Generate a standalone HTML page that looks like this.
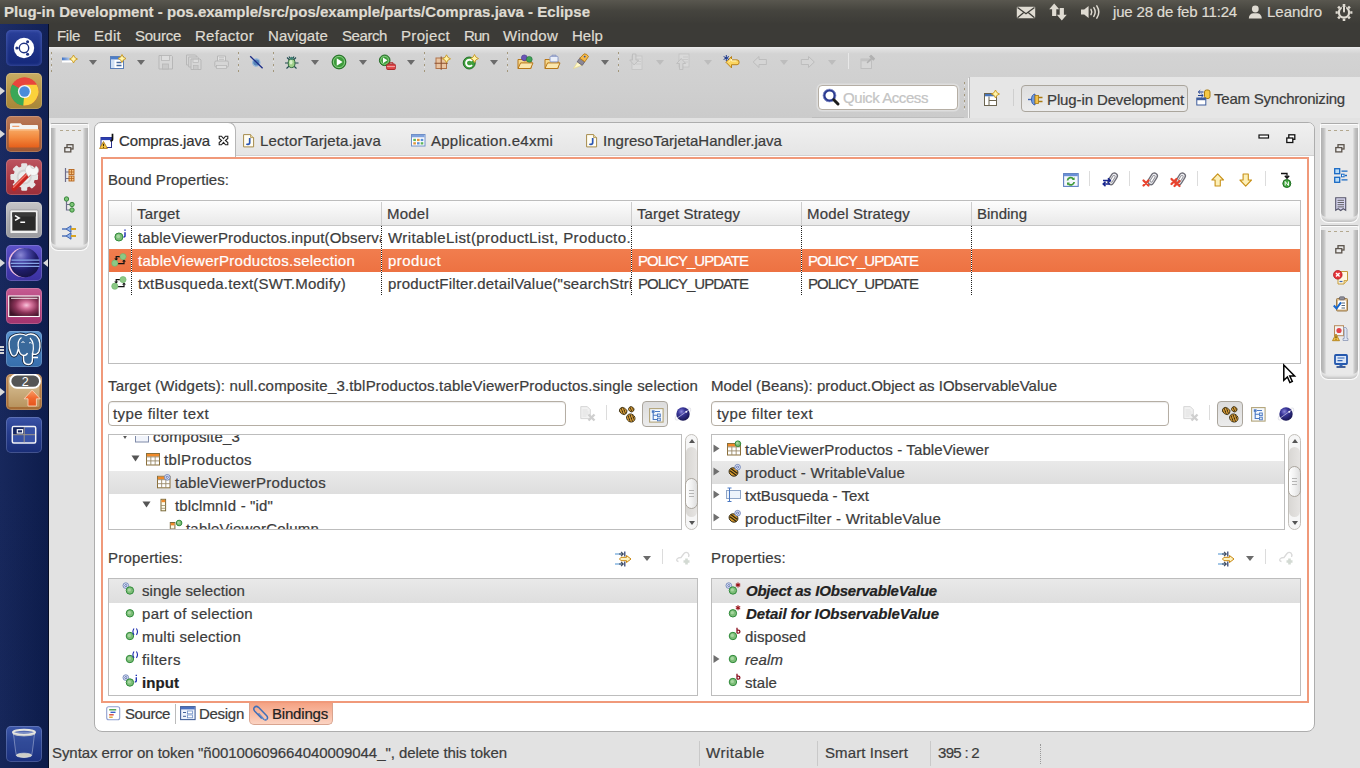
<!DOCTYPE html>
<html><head><meta charset="utf-8"><title>Eclipse</title>
<style>
*{box-sizing:border-box;margin:0;padding:0}
html,body{width:1360px;height:768px;overflow:hidden;background:#e2e2e2}
body{font-family:"Liberation Sans","DejaVu Sans",sans-serif;font-size:15px;color:#3c3c3c;position:relative}
.a{position:absolute}
.t{position:absolute;white-space:nowrap;line-height:20px;height:20px;-webkit-text-stroke:.22px currentColor}
svg{position:absolute;overflow:visible}
#top{left:0;top:0;width:1360px;height:24px;background:linear-gradient(#59574f,#45443e 45%,#3c3b37)}
#menubar{left:48px;top:24px;width:1312px;height:23px;background:#3c3b37}
#top .t,#menubar .t{color:#dfdbd2}
#launcher{left:0;top:24px;width:49px;height:744px;background:linear-gradient(90deg,rgba(255,255,255,.035),rgba(0,0,0,.12)),linear-gradient(#142562,#102158 30%,#0f2056 60%,#0e1f54);border-right:1px solid #070d24}
.tile{position:absolute;left:6px;width:36px;height:36px;border-radius:5px;overflow:hidden;box-shadow:inset 0 0 0 1px rgba(255,255,255,.18)}
#tb{left:49px;top:47px;width:1311px;height:71px;background:linear-gradient(#ececec,#dedede 3px,#d3d3d3 7px,#cfcfcf 60%,#cbcbcb)}
#persp{left:969px;top:77px;width:391px;height:41px;background:#e6e6e6;border-left:1px solid #bdbdbd}
#qa-zone{left:812px;top:117px;width:152px;height:1px;background:#bdbdbd}
#qa{left:818px;top:85px;width:140px;height:25px;background:#fff;border:1px solid #b5aea4;border-radius:4px;box-shadow:0 0 0 1.500px #dedede}
.vsep{position:absolute;width:1px;background:#b9b9b9}
.dots{position:absolute;width:1px;background:repeating-linear-gradient(#a3977b 0 2px,transparent 2px 3px,#e6e6e6 3px 4px,transparent 4px 6px)}
.tri{position:absolute;width:0;height:0;border-left:4px solid transparent;border-right:4px solid transparent;border-top:5px solid #6b6b6b}
.tri.l{border-top-color:#bdbdbd}
#folder{left:94px;top:122px;width:1221px;height:610px;background:#fff;border:1px solid #adadad;border-radius:7px 7px 8px 8px;overflow:hidden}
#tabhdr{left:0;top:0;width:1219px;height:33px;background:linear-gradient(#f0f0f0,#e5e5e5);border-bottom:1px solid #d2d2d2}
#acttab{left:-1px;top:-1px;width:142px;height:36px;background:#fff;border:1px solid #b6b6b6;border-bottom:none;border-radius:7px 8px 0 0}
#obox{left:101px;top:157px;width:1208px;height:546px;border:2px solid #f0997a;background:#fff}
.tbl{position:absolute;border:1px solid #bdbdbd;background:#fff}
.hdr{position:absolute;background:linear-gradient(#fdfdfd,#f3f3f3 50%,#e9e9e9);border-bottom:1px solid #c6c6c6}
.hsep{position:absolute;width:1px;background:#cdcdcd}
.dv{position:absolute;width:1px;background:repeating-linear-gradient(#222 0 1px,#fff 1px 2px)}
.selrow{position:absolute;background:linear-gradient(#f17d4e,#ed7242)}
.grow{position:absolute;background:linear-gradient(#e9e9e9,#dedede)}
.inp{position:absolute;background:#fff;border:1px solid #b5aea4;border-radius:4px;box-shadow:inset 0 1px 1px rgba(0,0,0,.08)}
.btn{position:absolute;border:1px solid #aaa59c;border-radius:4px;background:linear-gradient(#dcdcdc,#ececec)}
.sb{position:absolute;width:13px;background:#f6f6f6;border:1px solid #c3c0bb;border-radius:7px}
.sbtr{position:absolute;left:0;right:0;top:12px;bottom:12px;background:linear-gradient(90deg,#d9d7d4,#e6e4e2);border-radius:6px}
.sbt{position:absolute;left:-1px;width:13px;border:1px solid #aba69e;border-radius:6.5px;background:linear-gradient(90deg,#fff,#f1f1f1 50%,#dedede)}
.sbt i{position:absolute;left:3px;top:11px;width:5px;height:7px;background:repeating-linear-gradient(#b5b5b5 0 1px,transparent 1px 3px)}
.sb b{position:absolute;left:2.500px;width:0;height:0;border-left:3px solid transparent;border-right:3px solid transparent}
.sb b.u{top:4px;border-bottom:4px solid #555}
.sb b.d{bottom:4px;border-top:4px solid #555}
.trim{position:absolute;border:1px solid #fbfbfb;border-top:1px solid #ababab;border-radius:2px 2px 8px 8px;background:#e9e9e9;box-shadow:inset 0 1px 0 #fcfcfc,inset 0 -4px 3px -2px #c2c2c2}
.trim:before,.trim:after{content:"";position:absolute;top:4px;bottom:5px;width:5px}
.trim:before{left:0;background:linear-gradient(90deg,#b0b0b0,#c2c2c2 60%,#e2e2e2);border-radius:0 0 0 7px}
.trim:after{right:0;background:linear-gradient(270deg,#b0b0b0,#c2c2c2 60%,#e2e2e2);border-radius:0 0 7px 0}
#status{left:49px;top:738px;width:1311px;height:30px;background:#e2e2e2}
</style></head><body>
<div id="top" class="a">
<span class="t" style="left:4px;top:2px;font-size:15px;letter-spacing:0.021px;font-weight:bold;">Plug-in Development - pos.example/src/pos/example/parts/Compras.java - Eclipse</span>
<span class="t" style="left:1113px;top:2px;font-size:15px;letter-spacing:-0.176px;">jue 28 de feb 11:24</span>
<span class="t" style="left:1267px;top:2px;font-size:15px;letter-spacing:-0.009px;">Leandro</span>
<svg style="left:1016px;top:6px" width="20" height="13" viewBox="0 0 20 13" ><rect x=".8" y=".8" width="18.4" height="11.4" rx="1" fill="#dfdbd2"/><path d="M1.5 1.5l8.5 6.3 8.5-6.3M1.5 11.7l6-5M18.5 11.7l-6-5" stroke="#3f3e39" stroke-width="1.3" fill="none"/></svg>
<svg style="left:1049px;top:3px" width="18" height="18" viewBox="0 0 18 18" ><path d="M5.200 .500l5 5.800H7.300V13H3.100V6.300H.2z" fill="#dfdbd2"/><path d="M12.800 17.500l-5-5.800h2.900V5h4.200v6.700h2.900z" fill="#dfdbd2"/></svg>
<svg style="left:1080px;top:4px" width="22" height="16" viewBox="0 0 22 16" ><path d="M1 5.6h3.2L8.6 2v12L4.2 10.4H1z" fill="#dfdbd2"/><path d="M11 5.3q1.6 2.7 0 5.4M13.8 3.6q2.8 4.4 0 8.8M16.8 1.8q4 6.2 0 12.4" stroke="#dfdbd2" stroke-width="1.5" fill="none" stroke-linecap="round"/></svg>
<svg style="left:1248px;top:5px" width="15" height="14" viewBox="0 0 15 14" ><circle cx="7.3" cy="4" r="3.4" fill="#dfdbd2"/><path d="M.8 13.5q.2-4.6 4.2-5.3h4.6q4 .7 4.2 5.3z" fill="#dfdbd2"/></svg>
<svg style="left:1335px;top:3px" width="18" height="18" viewBox="0 0 18 18" ><g transform="translate(9 9.5)" fill="none" stroke="#dfdbd2"><circle r="5.1" stroke-width="2.2"/><g stroke-width="2.6"><path d="M0 -8.4v2.2M0 8.4v-2.2M-8.4 0h2.2M8.4 0h-2.2M-5.9 -5.9l1.6 1.6M5.9 5.9l-1.6 -1.6M5.9 -5.9l-1.6 1.6M-5.9 5.9l1.6 -1.6"/></g><path d="M0 -5.5v5" stroke="#3f3e39" stroke-width="4.4"/><path d="M0 -6.3v5.2" stroke-width="2" stroke-linecap="round"/></g></svg>
</div>
<div id="menubar" class="a">
<span class="t" style="left:9px;top:2px;font-size:15px;letter-spacing:-0.293px;">File</span>
<span class="t" style="left:46px;top:2px;font-size:15px;letter-spacing:0.285px;">Edit</span>
<span class="t" style="left:87px;top:2px;font-size:15px;letter-spacing:-0.255px;">Source</span>
<span class="t" style="left:147px;top:2px;font-size:15px;letter-spacing:0.287px;">Refactor</span>
<span class="t" style="left:220px;top:2px;font-size:15px;letter-spacing:0.100px;">Navigate</span>
<span class="t" style="left:294px;top:2px;font-size:15px;letter-spacing:-0.422px;">Search</span>
<span class="t" style="left:353px;top:2px;font-size:15px;letter-spacing:0.330px;">Project</span>
<span class="t" style="left:416px;top:2px;font-size:15px;letter-spacing:-0.844px;">Run</span>
<span class="t" style="left:455px;top:2px;font-size:15px;letter-spacing:0.273px;">Window</span>
<span class="t" style="left:524px;top:2px;font-size:15px;letter-spacing:0.035px;">Help</span>
</div>
<div id="launcher" class="a"><div class="tile" style="top:6px;background:linear-gradient(#2b409b,#1d3286 50%,#15287a);box-shadow:inset 0 0 3px 1px rgba(120,140,220,.35);"><svg style="left:0;top:0" width="37" height="37" viewBox="0 0 37 37"><g transform="translate(18 18)"><circle r="10.200" fill="#fff"/><circle r="4.700" fill="none" stroke="#1f3382" stroke-width="1.400"/><g fill="#1f3382"><circle cx="-7.200" cy="0" r="1.500"/><circle cx="3.600" cy="6.240" r="1.500"/><circle cx="3.600" cy="-6.240" r="1.500"/></g><g stroke="#1f3382" stroke-width="1"><path d="M2.300 4.100L-2.300 -4.100" opacity="0"/><path d="M-4.700 0h-1.200M2.350 4.070l.6 1.040M2.350 -4.070l.6 -1.040"/></g></g></svg></div>
<div class="tile" style="top:49px;background:linear-gradient(#c9ad64,#b39243 60%,#a78638);"><svg style="left:0;top:0" width="37" height="37" viewBox="0 0 37 37"><g transform="translate(18.5 18.5)"><circle r="14" fill="#e8453c"/><path d="M0 0L-12.1 -7A14 14 0 0 0 -1.2 13.95z" fill="#3aa757"/><path d="M0 0L-12.1 -7A14 14 0 0 0 -1.2 13.95L6 3.5z" fill="#3aa757"/><path d="M0 0L-1.2 13.95A14 14 0 0 0 12.1 -7L0 -7z" fill="#fbd23b"/><path d="M-12.1 -7A14 14 0 0 1 12.1 -7L0 -7z" fill="#e8453c"/><circle r="6.6" fill="#f4f4f4"/><circle r="5.2" fill="#4a8bdb"/></g></svg></div>
<div class="tile" style="top:92px;background:linear-gradient(#bb7a58,#a9633f 55%,#9e5834);"><svg style="left:0;top:0" width="37" height="37" viewBox="0 0 37 37"><defs><linearGradient id="fo" x1="0" y1="0" x2="0" y2="1"><stop offset="0" stop-color="#f7a863"/><stop offset=".45" stop-color="#f38a3f"/><stop offset="1" stop-color="#e65f1b"/></linearGradient></defs><path d="M4 8.300q0-1 1-1h9.500l1.800 1.700H31q1 0 1 1V16H4z" fill="#f4f4f2"/><path d="M6.300 10.400h7" stroke="#f0a070" stroke-width="1.100"/><rect x="2.800" y="13.300" width="30.400" height="18.200" rx="1.300" fill="url(#fo)"/><path d="M3.500 14h29" stroke="#fbc79a" stroke-width=".9"/></svg></div>
<div class="tile" style="top:135px;background:linear-gradient(#bd5560,#a93a45 55%,#9c2f3a);"><svg style="left:0;top:0" width="37" height="37" viewBox="0 0 37 37"><g transform="translate(18.200 18)"><g fill="#e6e6e6"><circle r="10.800"/><rect x="-3" y="-13.800" width="6" height="27.600" rx="1.200"/><rect x="-3" y="-13.800" width="6" height="27.600" rx="1.200" transform="rotate(45)"/><rect x="-3" y="-13.800" width="6" height="27.600" rx="1.200" transform="rotate(90)"/><rect x="-3" y="-13.800" width="6" height="27.600" rx="1.200" transform="rotate(135)"/></g><circle r="7.600" fill="#d4d4d4"/><circle r="5.600" fill="#ececec"/></g><path d="M8 29.500L22.500 15" stroke="#c8241f" stroke-width="5" stroke-linecap="round"/><path d="M7.600 28.300L21.500 14.400" stroke="#ef7468" stroke-width="1.400" stroke-linecap="round"/><path d="M20.500 14.500a5.200 5.200 0 0 1 3.700-8.600l1.300 3.200 2.700 .6 1.900-2.700a5.200 5.200 0 0 1-5.600 8.800l-2 2z" fill="#f6f6f6" stroke="#c9c9c9" stroke-width=".6"/></svg></div>
<div class="tile" style="top:178px;background:linear-gradient(#c6c6c8,#a9a9ad 55%,#9a9a9f);"><svg style="left:0;top:0" width="37" height="37" viewBox="0 0 37 37"><rect x="4" y="8" width="28" height="23.500" rx="1.200" fill="#f0f0f0" stroke="#8d8d90" stroke-width=".7"/><rect x="6.300" y="10.400" width="23.400" height="18.200" fill="#2a2a2a"/><path d="M6.300 10.400h23.400v4h-23.400z" fill="#3a3a3a"/><path d="M9 13.700l4.200 2.300-4.200 2.300" stroke="#fff" stroke-width="1.500" fill="none"/><path d="M14.300 20.300h4.800" stroke="#fff" stroke-width="1.500"/></svg></div>
<div class="tile" style="top:221px;background:linear-gradient(#5d52c9,#463cb0 55%,#3b31a0);"><svg style="left:0;top:0" width="37" height="37" viewBox="0 0 37 37"><defs><radialGradient id="eg" cx=".36" cy=".24" r=".8"><stop offset="0" stop-color="#8b89d6"/><stop offset=".3" stop-color="#4a48a8"/><stop offset=".65" stop-color="#1f1d6a"/><stop offset="1" stop-color="#151345"/></radialGradient></defs><circle cx="17" cy="17.700" r="14.600" fill="#f0bfe0"/><circle cx="18.800" cy="17.700" r="14.600" fill="url(#eg)"/><path d="M5.500 15.200h28M4.800 18.300h28.600M5.500 21.400h28" stroke="#86a4e6" stroke-width="1.250"/></svg></div>
<div class="tile" style="top:264px;background:linear-gradient(#c65c92,#b03f7a 55%,#a3346e);"><svg style="left:0;top:0" width="37" height="37" viewBox="0 0 37 37"><defs><radialGradient id="ig" cx=".58" cy=".45" r=".62"><stop offset="0" stop-color="#f7c6dc"/><stop offset=".25" stop-color="#d9779f"/><stop offset=".6" stop-color="#8b3358"/><stop offset="1" stop-color="#3f1428"/></radialGradient></defs><rect x="2.700" y="8" width="30.600" height="20.500" fill="url(#ig)" stroke="#fff" stroke-width="1.100"/><path d="M5 10.300h26.500" stroke="#fff" stroke-width=".9"/></svg></div>
<div class="tile" style="top:307px;background:linear-gradient(#5c95d0,#417ab9 55%,#376eac);"><svg style="left:0;top:0" width="37" height="37" viewBox="0 0 37 37"><path d="M6 5.500C2.500 8 2 16 5 22.500C6.500 26 9.500 26 11 22.500L12.500 17.500C13 21.500 15 24 17.500 24.500L17.500 28C17.500 32 20 33.500 22.500 33.500C25.500 33.500 26.500 31 26.500 28L26.500 23C29 24 32 23 33 20.500C35 15 34 8 30.500 5C27 2.500 22.500 2.500 20 4.500C17 2.500 10 2.500 6 5.500Z" fill="#39699b" stroke="#17233a" stroke-width="3"/><path d="M6 5.500C2.500 8 2 16 5 22.500C6.500 26 9.500 26 11 22.500L12.500 17.500C13 21.500 15 24 17.500 24.500L17.500 28C17.500 32 20 33.500 22.500 33.500C25.500 33.500 26.500 31 26.500 28L26.500 23C29 24 32 23 33 20.500C35 15 34 8 30.500 5C27 2.500 22.500 2.500 20 4.500C17 2.500 10 2.500 6 5.500Z" fill="#39699b" stroke="#fff" stroke-width="1.400"/><path d="M12.500 17.500C11.500 12.500 12.500 8.500 15.500 6.500M26.500 23C28 17 27.500 10.500 24 7M17.500 24.500C19.500 24.500 21 23.500 21.500 22" fill="none" stroke="#fff" stroke-width="1.200"/><path d="M15.500 11.500q1.500-1.500 3 0M23 12q1.300-1 2.500 .3" stroke="#fff" stroke-width="1" fill="none"/><path d="M26.500 26.500h5.500" stroke="#fff" stroke-width="1.300"/></svg></div>
<div class="tile" style="top:350px;background:linear-gradient(#c08a55,#b37a43 50%,#a56c35);"><svg style="left:0;top:0" width="37" height="37" viewBox="0 0 37 37"><defs><linearGradient id="ub" x1="0" y1="0" x2="0" y2="1"><stop offset="0" stop-color="#dcc59c"/><stop offset="1" stop-color="#b8945f"/></linearGradient><linearGradient id="ua" x1="0" y1="0" x2="0" y2="1"><stop offset="0" stop-color="#f9a06a"/><stop offset=".5" stop-color="#f26a30"/><stop offset="1" stop-color="#e4531c"/></linearGradient></defs><rect x="2.500" y="2.500" width="31" height="30.500" rx="1.500" fill="url(#ub)"/><path d="M26.200 16l8 8.800h-3.800V32h-8.400v-7.200h-3.800z" fill="url(#ua)" stroke="#fbd0b4" stroke-width=".9"/><rect x="4.400" y=".6" width="29.600" height="13.200" rx="6.600" fill="#555" stroke="#fff" stroke-width="1.900"/><text x="19.200" y="11.700" font-size="12.500" text-anchor="middle" fill="#fff" font-family="Liberation Sans,sans-serif">2</text></svg></div>
<div class="tile" style="top:393px;background:linear-gradient(#3a52a6,#263c8c 45%,#192d76);"><svg style="left:0;top:0" width="37" height="37" viewBox="0 0 37 37"><rect x="6.300" y="9.500" width="23.400" height="16.500" rx="1.500" fill="#3852a6" stroke="#f2f2f6" stroke-width="1.500"/><rect x="7.200" y="10.400" width="10.800" height="7" fill="#14245f"/><path d="M18.200 10.200v15.200M7 17.700h22" stroke="#a89c86" stroke-width=".9"/><rect x="11.300" y="12.700" width="5.300" height="3.300" fill="none" stroke="#fff" stroke-width="1.200"/></svg></div>
<div class="tile" style="top:702px;background:linear-gradient(#3d57aa,#27408f 45%,#1b307e);"><svg style="left:0;top:0" width="37" height="37" viewBox="0 0 37 37"><path d="M7.300 6.500q.8 6 1.500 12.500t1.700 11q7.500 2.600 15 0 1-4.500 1.700-11T28.700 6.500z" fill="rgba(70,95,170,.35)" stroke="rgba(225,230,245,.45)" stroke-width=".9"/><ellipse cx="18" cy="29.300" rx="7.600" ry="2.100" fill="#cfcfc6" stroke="#efefe8" stroke-width=".6"/><ellipse cx="18" cy="6.300" rx="11" ry="2.600" fill="rgba(120,140,200,.5)" stroke="#e6e6e0" stroke-width="2.100"/><path d="M7.200 8.300q10.800 3.200 21.600 0" stroke="#bfc3c8" stroke-width="1" fill="none"/></svg></div>
<div class="a" style="left:0;top:63px;width:0;height:0;border-top:4px solid transparent;border-bottom:4px solid transparent;border-left:5px solid #d9d9d9"></div>
<div class="a" style="left:0;top:106px;width:0;height:0;border-top:4px solid transparent;border-bottom:4px solid transparent;border-left:5px solid #d9d9d9"></div>
<div class="a" style="left:0;top:235px;width:0;height:0;border-top:4px solid transparent;border-bottom:4px solid transparent;border-left:5px solid #d9d9d9"></div>
<div class="a" style="left:0;top:364px;width:0;height:0;border-top:4px solid transparent;border-bottom:4px solid transparent;border-left:5px solid #d9d9d9"></div>
<div class="a" style="left:43px;top:235px;width:0;height:0;border-top:4px solid transparent;border-bottom:4px solid transparent;border-right:5px solid #d9d9d9"></div>
<div class="a" style="left:0;top:322px;width:4px;height:1.500px;background:#d6d6d6"></div>
<div class="a" style="left:0;top:325px;width:4px;height:1.500px;background:#d6d6d6"></div>
<div class="a" style="left:0;top:328px;width:4px;height:1.500px;background:#d6d6d6"></div></div>
<div id="tb" class="a"></div>
<div id="qa-zone" class="a"></div>
<div id="persp" class="a"></div>
<div id="qa" class="a"></div>
<span class="t" style="left:843px;top:88px;font-size:15px;letter-spacing:-0.419px;color:#c4c4c4;">Quick Access</span>
<div class="btn" style="left:1021px;top:85px;width:167px;height:27px;background:linear-gradient(#dedede,#ececec)"></div>
<span class="t" style="left:1047px;top:90px;font-size:15px;letter-spacing:-0.118px;">Plug-in Development</span>
<span class="t" style="left:1214px;top:89px;font-size:15px;letter-spacing:-0.227px;">Team Synchronizing</span>
<div class="dots" style="left:51px;top:52px;height:20px"></div>
<svg style="left:62px;top:54px" width="16" height="16" viewBox="0 0 16 16" ><defs><linearGradient id="gb" x1="0" x2="1"><stop offset="0" stop-color="#3f73c7"/><stop offset="1" stop-color="#e8f0fb"/></linearGradient></defs><rect x="0" y="3.5" width="11" height="3" fill="url(#gb)"/><rect x="0" y="6.5" width="12" height="2" fill="#fff"/><path d="M11.5 1 l1.4 2.6 2.6 1.4 -2.6 1.4 -1.4 2.6 -1.4 -2.6 -2.6 -1.4 2.6 -1.4z" fill="#fff3a8" stroke="#c8961e" stroke-width=".9"/></svg>
<div class="tri" style="left:88.5px;top:60px"></div>
<svg style="left:110px;top:54px" width="16" height="16" viewBox="0 0 16 16" ><rect x=".5" y="2.5" width="13" height="12" fill="#fff" stroke="#5a7fb8"/><rect x="1" y="3" width="12" height="2.5" fill="#4b7dc9"/><rect x="1" y="6" width="3.5" height="8" fill="#cfe0f5"/><path d="M6.5 8.5h5M6.5 11.5h5" stroke="#456a9f" stroke-width="1.3"/><path d="M12 0.5 l1.4 2.6 2.6 1.4 -2.6 1.4 -1.4 2.6 -1.4 -2.6 -2.6 -1.4 2.6 -1.4z" fill="#fff3a8" stroke="#c8961e" stroke-width=".9"/></svg>
<div class="tri" style="left:136.5px;top:60px"></div>
<svg style="left:158px;top:54px" width="16" height="16" viewBox="0 0 16 16" ><path d="M1 1.5h12.5l1 1V15H1z" fill="#d6d6d6" stroke="#b7b7b7"/><rect x="3.5" y="1.5" width="8" height="5" fill="#dedede" stroke="#b7b7b7" stroke-width=".8"/><rect x="4.5" y="10" width="6" height="5" fill="#c9c9c9" stroke="#b7b7b7" stroke-width=".8"/></svg>
<svg style="left:186px;top:54px" width="16" height="16" viewBox="0 0 16 16" ><path d="M.5 1h9l.8.8V11H.5z" fill="#d6d6d6" stroke="#b7b7b7"/><path d="M2.7 3h9l.8.8V13H2.7z" fill="#d6d6d6" stroke="#b7b7b7"/><path d="M5 5h9l1 1V15.5H5z" fill="#d6d6d6" stroke="#b7b7b7"/><rect x="7" y="5.2" width="5.5" height="3.3" fill="#dedede" stroke="#b7b7b7" stroke-width=".7"/><rect x="7.6" y="11.5" width="4.5" height="4" fill="#c9c9c9" stroke="#b7b7b7" stroke-width=".7"/></svg>
<svg style="left:214px;top:54px" width="16" height="16" viewBox="0 0 16 16" ><path d="M3.5 7V2h8v5" fill="#e2e2e2" stroke="#b7b7b7"/><path d="M5 3.8h5M5 5.6h5" stroke="#b7b7b7" stroke-width=".8"/><rect x=".8" y="7" width="13.6" height="6" rx="1.2" fill="#d6d6d6" stroke="#b7b7b7"/><rect x="2.5" y="11.5" width="10" height="3" fill="#dcdcdc" stroke="#b7b7b7" stroke-width=".8"/></svg>
<div class="dots" style="left:237.5px;top:52px;height:20px"></div>
<svg style="left:249px;top:54px" width="16" height="16" viewBox="0 0 16 16" ><circle cx="7.3" cy="8.5" r="3.700" fill="#5685b8" stroke="#9dbbdc" stroke-width="1.200"/><path d="M1.2 2.2L13.6 14.2" stroke="#1a2a86" stroke-width="1.3"/></svg>
<div class="dots" style="left:272.5px;top:52px;height:20px"></div>
<svg style="left:284px;top:54px" width="16" height="16" viewBox="0 0 16 16" ><path d="M3 3.5l3 3M12 3.5l-3 3M1 9h4M10 9h4.5M2.5 14.5l3.2-3M12.5 14.5l-3.2-3M5 2.5L6.5 5M10 2.5L8.5 5" stroke="#1f4a4f" stroke-width="1.1" fill="none"/><ellipse cx="7.6" cy="9.2" rx="3.4" ry="4.4" fill="#9fd08a" stroke="#2f6b3d" stroke-width="1"/><ellipse cx="7" cy="8.3" rx="1.5" ry="2.3" fill="#d7efc8"/><circle cx="7.6" cy="4.3" r="1.6" fill="#3f7f73"/></svg>
<div class="tri" style="left:310.5px;top:60px"></div>
<svg style="left:331px;top:54px" width="16" height="16" viewBox="0 0 16 16" ><circle cx="8" cy="8" r="6.9" fill="#3d9b3a" stroke="#236b25" stroke-width="1"/><circle cx="8" cy="8" r="5.6" fill="none" stroke="#8fd38a" stroke-width=".9"/><path d="M5.723 4.205 v7.59 l5.865 -3.795z" fill="#fff"/></svg>
<div class="tri" style="left:358.5px;top:60px"></div>
<svg style="left:378px;top:54px" width="18" height="16" viewBox="0 0 18 16" ><circle cx="6.7" cy="6.3" r="5.3" fill="#3d9b3a" stroke="#236b25" stroke-width="1"/><circle cx="6.7" cy="6.3" r="4" fill="none" stroke="#8fd38a" stroke-width=".9"/><path d="M4.951 3.385 v5.83 l4.505 -2.915z" fill="#fff"/><rect x="8.7" y="10.2" width="8.6" height="5.3" rx=".8" fill="#e0484a" stroke="#a81e22" stroke-width=".9"/><path d="M11 10V8.8h4V10" fill="none" stroke="#a81e22" stroke-width="1"/><path d="M9 12.6h8" stroke="#f7b0b0" stroke-width=".9"/></svg>
<div class="tri" style="left:406.5px;top:60px"></div>
<div class="dots" style="left:423.5px;top:52px;height:20px"></div>
<svg style="left:435px;top:54px" width="16" height="16" viewBox="0 0 16 16" ><rect x="1" y="4" width="10.5" height="10.5" fill="#e9c4a1" stroke="#b0724a" stroke-width="1"/><path d="M6.2 2.5v13.2M-.5 9.3h13.3" stroke="#8d4f2e" stroke-width="1.1"/><path d="M11.5 0.8 l1.4 2.6 2.6 1.4 -2.6 1.4 -1.4 2.6 -1.4 -2.6 -2.6 -1.4 2.6 -1.4z" fill="#fff3a8" stroke="#c8961e" stroke-width=".9"/></svg>
<svg style="left:462px;top:54px" width="18" height="16" viewBox="0 0 18 16" ><circle cx="7.2" cy="9" r="6" fill="#3f9e3c" stroke="#24702a" stroke-width="1"/><path d="M10 7a3.3 3.3 0 1 0 0 4" fill="none" stroke="#fff" stroke-width="1.9"/><path d="M12.5 0.5 l1.4 2.6 2.6 1.4 -2.6 1.4 -1.4 2.6 -1.4 -2.6 -2.6 -1.4 2.6 -1.4z" fill="#fff3a8" stroke="#c8961e" stroke-width=".9"/></svg>
<div class="tri" style="left:489.5px;top:60px"></div>
<div class="dots" style="left:506.5px;top:52px;height:20px"></div>
<svg style="left:517px;top:54px" width="17" height="16" viewBox="0 0 17 16" ><path d="M1 5.5 h4.5 l1.2 1.3 H14 V14.5 H1z" fill="#f6d98f" stroke="#b77718" stroke-width="1"/><path d="M1 14.5 l2.6 -5.6 H16 l-2.4 5.6z" fill="#fbe7ae" stroke="#b77718" stroke-width="1"/><circle cx="7.3" cy="3.8" r="2.9" fill="#6a55b5" stroke="#43338a" stroke-width=".6"/><circle cx="12.3" cy="5.3" r="2.9" fill="#3ea256" stroke="#226b36" stroke-width=".6"/></svg>
<svg style="left:544px;top:54px" width="17" height="16" viewBox="0 0 17 16" ><path d="M1 5.5 h4.5 l1.2 1.3 H14 V14.5 H1z" fill="#f6d98f" stroke="#b77718" stroke-width="1"/><path d="M1 14.5 l2.6 -5.6 H16 l-2.4 5.6z" fill="#fbe7ae" stroke="#b77718" stroke-width="1"/><rect x="6" y="2.3" width="8" height="5.6" rx="1" fill="#e9eef9" stroke="#8593c3" stroke-width=".9"/><path d="M8 2.3V1.2h4v1.1" stroke="#8593c3" fill="none" stroke-width=".9"/></svg>
<svg style="left:572px;top:53px" width="18" height="17" viewBox="0 0 18 17" ><path d="M1.5 15.5 L6 8.5 l4.5 3.5z" fill="#fff8c9" stroke="#e8d67e" stroke-width=".6"/><path d="M5.2 8.8 L7.8 5.2 l5 3.6 -2.6 3.6z" fill="#8b8795" stroke="#5d596a" stroke-width=".8"/><path d="M7.8 5.2 L12 0.9 q2.8-.5 4.5 2.6 L12.8 8.8z" fill="#f3b84a" stroke="#b47a14" stroke-width=".9"/><circle cx="12.7" cy="3.6" r=".9" fill="#2b4fa3"/></svg>
<div class="tri" style="left:600.5px;top:60px"></div>
<div class="dots" style="left:617.5px;top:52px;height:20px"></div>
<svg style="left:628px;top:53px" width="16" height="18" viewBox="0 0 16 18" ><rect x="4" y="3" width="10" height="13.5" fill="#d9d9d9" stroke="#c2c2c2" stroke-width=".8"/><path d="M8 6h5M8 8.5h5M8 11h5" stroke="#c5c5c5" stroke-width=".8"/><path d="M4.5 1h3.4v6h2.8L6.2 12 1.7 7h2.8z" fill="#d4d4d4" stroke="#bcbcbc" stroke-width=".9"/></svg>
<div class="tri l" style="left:656px;top:60px"></div>
<svg style="left:675px;top:53px" width="16" height="18" viewBox="0 0 16 18" ><rect x="4" y="1" width="10" height="13" fill="#d9d9d9" stroke="#c2c2c2" stroke-width=".8"/><path d="M8 4h5M8 6.5h5M8 9h5" stroke="#c5c5c5" stroke-width=".8"/><path d="M4.5 16.5h3.4v-6h2.8L6.2 5.5 1.7 10.5h2.8z" fill="#d4d4d4" stroke="#bcbcbc" stroke-width=".9"/></svg>
<div class="tri l" style="left:703.5px;top:60px"></div>
<svg style="left:723px;top:54px" width="18" height="16" viewBox="0 0 18 16" ><path d="M8.5 2.5 L3 8.3 l5.5 5.6 v-3.2 h5.6 q2 0 2-2.4 t-2-2.4 H8.5z" fill="#fbd560" stroke="#b9821a" stroke-width="1" stroke-linejoin="round"/><path d="M5.5 8.2 l3-3.2v2h5" stroke="#fff3b8" stroke-width="1" fill="none"/><path d="M3.3 1v6M.6 2.5l5.4 3M6 2.5L.6 5.5" stroke="#1e3a8c" stroke-width="1"/></svg>
<svg style="left:752px;top:54px" width="16" height="16" viewBox="0 0 16 16" ><path d="M7 2.5 L1.2 8 l5.8 5.5 v-3 h7.4 v-5 H7z" fill="#d5d5d5" stroke="#bdbdbd" stroke-width="1" stroke-linejoin="round"/></svg>
<div class="tri l" style="left:780px;top:60px"></div>
<svg style="left:800px;top:54px" width="16" height="16" viewBox="0 0 16 16" ><path d="M8.5 2.5 L14.3 8 l-5.8 5.5 v-3 H1.3 v-5 h7.2z" fill="#d5d5d5" stroke="#bdbdbd" stroke-width="1" stroke-linejoin="round"/></svg>
<div class="tri l" style="left:828px;top:60px"></div>
<div class="vsep" style="left:848px;top:53px;height:16px;background:#e8e8e8"></div>
<svg style="left:860px;top:54px" width="16" height="16" viewBox="0 0 16 16" ><rect x="1" y="5" width="10.5" height="9.5" fill="#d6d6d6" stroke="#bdbdbd" stroke-width=".9"/><rect x="1" y="5" width="10.5" height="2.3" fill="#c3c3c3"/><path d="M7.5 8.5 L11 5M10 2.5l3.3 3.3M11 1.5l3.3 3.3" stroke="#b1b1b1" stroke-width="1.6" stroke-linecap="round"/></svg>
<div class="dots" style="left:964px;top:82px;height:30px"></div>
<div class="vsep" style="left:968px;top:78px;height:40px;background:#f4f4f4"></div>
<svg style="left:984px;top:90px" width="16" height="16" viewBox="0 0 16 16" ><rect x=".5" y="3.500" width="12" height="12" fill="#fff" stroke="#6b6450" stroke-width="1"/><rect x="1" y="4" width="11" height="2.300" fill="#4673b9"/><path d="M5 6.500v9M5 10.500h7.500" stroke="#6b6450" stroke-width="1"/><path d="M11.5 0 l1.4 2.6 2.6 1.4 -2.6 1.4 -1.4 2.6 -1.4 -2.6 -2.6 -1.4 2.6 -1.4z" fill="#fff3a8" stroke="#c8961e" stroke-width=".9"/></svg>
<div class="vsep" style="left:1013px;top:89px;height:17px;background:#cfcfcf"></div>
<svg style="left:1027px;top:92px" width="17" height="15" viewBox="0 0 17 15" ><path d="M1 7.500h4" stroke="#3a62b0" stroke-width="1.400"/><path d="M4.500 7.500q0-5 3.500-5.500v11q-3.500-.5-3.500-5.500z" fill="#6f9be0" stroke="#2f56a8" stroke-width=".9"/><rect x="8" y="3.500" width="3.500" height="8" fill="#f2c04a" stroke="#a97a12" stroke-width=".8"/><path d="M11.500 5.500h4M11.500 9.500h4" stroke="#a97a12" stroke-width="1.300"/></svg>
<svg style="left:1196px;top:89px" width="16" height="17" viewBox="0 0 16 17" ><rect x="8.500" y="1" width="5.500" height="8.500" rx="2" fill="#f6c945" stroke="#a87b12" stroke-width="1"/><rect x=".8" y="9" width="9" height="7" fill="#fff" stroke="#3e5d9c" stroke-width="1"/><rect x=".8" y="9" width="9" height="2.200" fill="#3e5d9c"/><path d="M7.500 3H2.500M4.200 1.300L2.300 3l1.900 1.700M2 6.500h5M5.300 4.800L7.200 6.500 5.300 8.200" stroke="#1f3f8f" stroke-width="1" fill="none"/></svg>
<svg style="left:822px;top:88px" width="18" height="18" viewBox="0 0 18 18" ><circle cx="7.500" cy="7.500" r="5.300" fill="#fff" stroke="#2a3a8f" stroke-width="2.600"/><circle cx="7.500" cy="7.500" r="6.400" fill="none" stroke="#8f9bd0" stroke-width=".8"/><path d="M11.800 11.800l4.200 4.200" stroke="#1b1b1b" stroke-width="3" stroke-linecap="round"/></svg>
<div class="trim" style="left:50px;top:123px;width:39px;height:128px"></div>
<div class="trim" style="left:1320px;top:123px;width:39px;height:100px"></div>
<div class="trim" style="left:1320px;top:225px;width:39px;height:155px"></div>
<div class="a" style="left:60px;top:130px;width:3px;height:1px;background:#b3a88f"></div><div class="a" style="left:66px;top:130px;width:3px;height:1px;background:#b3a88f"></div><div class="a" style="left:72px;top:130px;width:3px;height:1px;background:#b3a88f"></div><div class="a" style="left:78px;top:130px;width:3px;height:1px;background:#b3a88f"></div>
<svg style="left:64px;top:144px" width="10" height="9" viewBox="0 0 10 9" ><rect x="3" y=".7" width="6" height="4.300" fill="#ececec" stroke="#5b534b" stroke-width="1.300"/><rect x=".8" y="3.600" width="6" height="4.300" fill="#ececec" stroke="#5b534b" stroke-width="1.300"/></svg>
<svg style="left:64px;top:168px" width="12" height="15" viewBox="0 0 12 15" ><path d="M1.500 0v14M1.500 4h3.500M1.500 10.500h3.500" stroke="#6d6d8a" stroke-width="1.200" fill="none"/><rect x="5" y="1.5" width="5" height="5" fill="#f6c483" stroke="#b5651d" stroke-width=".9"/><path d="M7.5 1.5v5M5 4h5" stroke="#b5651d" stroke-width=".8"/><rect x="5" y="8" width="5" height="5" fill="#f6c483" stroke="#b5651d" stroke-width=".9"/><path d="M7.5 8v5M5 10.5h5" stroke="#b5651d" stroke-width=".8"/></svg>
<svg style="left:63px;top:196px" width="13" height="17" viewBox="0 0 13 17" ><path d="M3.500 3v11.500M3.500 8.500h5M3.500 14h5" stroke="#6d6d8a" stroke-width="1.200" fill="none"/><circle cx="3.500" cy="3" r="2.200" fill="#7cc576" stroke="#2f7d32" stroke-width=".9"/><circle cx="9" cy="8.500" r="2.200" fill="#7cc576" stroke="#2f7d32" stroke-width=".9"/><circle cx="9" cy="14" r="2.200" fill="#7cc576" stroke="#2f7d32" stroke-width=".9"/></svg>
<svg style="left:62px;top:225px" width="15" height="15" viewBox="0 0 15 15" ><path d="M0 4h4" stroke="#3a62b0" stroke-width="1.300"/><path d="M9 0.8 L4 4 L9 7.2z" fill="#8fb3ea" stroke="#2f56a8" stroke-width=".9"/><path d="M9 4h5" stroke="#d9a521" stroke-width="2"/><path d="M0 11h4" stroke="#3a62b0" stroke-width="1.300"/><path d="M9 7.8 L4 11 L9 14.2z" fill="#8fb3ea" stroke="#2f56a8" stroke-width=".9"/><path d="M9 11h5" stroke="#d9a521" stroke-width="2"/></svg>
<div class="a" style="left:1328px;top:130px;width:3px;height:1px;background:#b3a88f"></div><div class="a" style="left:1334px;top:130px;width:3px;height:1px;background:#b3a88f"></div><div class="a" style="left:1340px;top:130px;width:3px;height:1px;background:#b3a88f"></div><div class="a" style="left:1346px;top:130px;width:3px;height:1px;background:#b3a88f"></div>
<svg style="left:1335px;top:143.5px" width="10" height="9" viewBox="0 0 10 9" ><rect x="3" y=".7" width="6" height="4.300" fill="#ececec" stroke="#5b534b" stroke-width="1.300"/><rect x=".8" y="3.600" width="6" height="4.300" fill="#ececec" stroke="#5b534b" stroke-width="1.300"/></svg>
<svg style="left:1334px;top:168px" width="14" height="15" viewBox="0 0 14 15" ><rect x=".7" y=".7" width="5" height="5" fill="#b9dcf7" stroke="#1769c4" stroke-width="1.300"/><rect x=".7" y="9.300" width="5" height="5" fill="#b9dcf7" stroke="#1769c4" stroke-width="1.300"/><path d="M7.500 3.200h6M7.500 11.800h6M11 7.500h2" stroke="#1769c4" stroke-width="1.300"/><rect x="7.500" y="6.200" width="2.600" height="2.600" fill="#fff" stroke="#1769c4" stroke-width="1"/></svg>
<svg style="left:1335px;top:197px" width="12" height="15" viewBox="0 0 12 15" ><path d="M.7 .7h10v12.500l-2.500-1.500-2.500 1.800-2.500-1.800L.7 13.200z" fill="#d6d4ee" stroke="#55556a" stroke-width="1.100"/><path d="M2.500 3.300h6.500M2.500 5.500h6.500M2.500 7.700h6.500M2.500 9.900h6.500" stroke="#555" stroke-width=".9"/></svg>
<div class="a" style="left:1328px;top:231px;width:3px;height:1px;background:#b3a88f"></div><div class="a" style="left:1334px;top:231px;width:3px;height:1px;background:#b3a88f"></div><div class="a" style="left:1340px;top:231px;width:3px;height:1px;background:#b3a88f"></div><div class="a" style="left:1346px;top:231px;width:3px;height:1px;background:#b3a88f"></div>
<svg style="left:1335px;top:244.5px" width="10" height="9" viewBox="0 0 10 9" ><rect x="3" y=".7" width="6" height="4.300" fill="#ececec" stroke="#5b534b" stroke-width="1.300"/><rect x=".8" y="3.600" width="6" height="4.300" fill="#ececec" stroke="#5b534b" stroke-width="1.300"/></svg>
<svg style="left:1333px;top:270px" width="16" height="15" viewBox="0 0 16 15" ><path d="M5 1.500h9.500v9l-3.500 3.500H5z" fill="#fff8e2" stroke="#c49a3a" stroke-width="1"/><path d="M11 14v-3.500h3.500" fill="#edd596" stroke="#c49a3a" stroke-width=".8"/><path d="M6.500 11.500h3" stroke="#3a66b5" stroke-width="1.200"/><circle cx="4.800" cy="4.800" r="4.300" fill="#e8343a" stroke="#a9151b" stroke-width=".8"/><path d="M3 3l3.600 3.600M6.600 3L3 6.600" stroke="#fff" stroke-width="1.400"/></svg>
<svg style="left:1333px;top:296px" width="16" height="16" viewBox="0 0 16 16" ><rect x="3.500" y="2.500" width="11" height="12.500" rx="1" fill="#d9b98a" stroke="#9a7a4a" stroke-width="1"/><rect x="5" y="4.500" width="8" height="9" fill="#fff"/><rect x="6.500" y=".8" width="5" height="3" rx=".8" fill="#8f8f9a" stroke="#5d5d68" stroke-width=".7"/><path d="M8.500 7h3.500M8.500 9.500h3.500M8.500 12h3.500" stroke="#456" stroke-width=".9"/><path d="M.8 9.500l2.700 3L8 6.300" stroke="#1667cf" stroke-width="2" fill="none"/></svg>
<svg style="left:1332px;top:325px" width="17" height="17" viewBox="0 0 17 17" ><rect x="2.500" y=".7" width="9" height="10" fill="#f3f3f3" stroke="#b78a5a" stroke-width="1"/><circle cx="7" cy="5.500" r="2.600" fill="#e0444a"/><path d="M11.500 2.500q3-1 3.500 2v9h1v2h-5v-2h1.200V5z" fill="#dfe6f3" stroke="#8b98b5" stroke-width=".8"/><path d="M4 9L.5 15.700h7z" fill="#f7c442" stroke="#a87610" stroke-width=".8"/><path d="M4 11.300v2M4 14.200v.6" stroke="#3a2a00" stroke-width="1"/></svg>
<svg style="left:1334px;top:354px" width="14" height="14" viewBox="0 0 14 14" ><rect x="1" y="1" width="12" height="9" rx=".8" fill="#dbe6f7" stroke="#2558ad" stroke-width="1.800"/><path d="M3.500 4h7M3.500 6.700h5" stroke="#2f64b8" stroke-width="1.200"/><path d="M5.500 10.500h3v1.800h-3z" fill="#2f64b8"/><path d="M2.500 13h9" stroke="#1b3f86" stroke-width="1.600"/></svg>
<div id="folder" class="a"><div id="tabhdr" class="a"></div><div id="acttab" class="a"></div></div>
<div id="obox" class="a"></div>
<span class="t" style="left:119px;top:131px;font-size:15px;letter-spacing:-0.129px;color:#333;">Compras.java</span>
<span class="t" style="left:260px;top:131px;font-size:15px;letter-spacing:0.144px;">LectorTarjeta.java</span>
<span class="t" style="left:431px;top:131px;font-size:15px;letter-spacing:0.261px;">Application.e4xmi</span>
<span class="t" style="left:603px;top:131px;font-size:15px;letter-spacing:0.021px;">IngresoTarjetaHandler.java</span>
<svg style="left:99px;top:133px" width="16" height="16" viewBox="0 0 16 16" ><rect x="2" y="4.500" width="10.500" height="10" fill="#fff" stroke="#2a2f8c" stroke-width="1"/><rect x="2" y="4.500" width="10.500" height="2.600" fill="#2a3fb0"/><path d="M13.500 .8v5.400q0 1.800-2.300 1.500" stroke="#111" stroke-width="1.700" fill="none"/><path d="M4.500 8.500L.6 15.500h7.800z" fill="#f7c442" stroke="#a87610" stroke-width=".8"/><path d="M4.500 10.700v2.500M4.500 14v.8" stroke="#3a2a00" stroke-width="1.100"/></svg>
<svg style="left:218px;top:135px" width="11" height="11" viewBox="0 0 11 11" ><path d="M1.200 1.200l2.300 0L5.500 3.600 7.500 1.200h2.300v2.300L7.400 5.500l2.400 2v2.300H7.500L5.500 7.400l-2 2.400H1.200V7.500l2.400-2-2.400-2z" fill="#fff" stroke="#222" stroke-width="1.100" stroke-linejoin="miter"/></svg>
<svg style="left:243px;top:133.5px" width="12" height="14" viewBox="0 0 12 14" ><path d="M.6 .6h7l3 3v9.300H.6z" fill="#fffdf3" stroke="#a58a4a" stroke-width="1"/><path d="M7.600 .6v3h3" fill="#ead9a6" stroke="#a58a4a" stroke-width=".8"/><path d="M6.700 4v4.600q0 1.800-1.800 1.800-.9 0-1.500-.5" stroke="#2a55b3" stroke-width="1.700" fill="none"/></svg>
<svg style="left:586px;top:133.5px" width="12" height="14" viewBox="0 0 12 14" ><path d="M.6 .6h7l3 3v9.300H.6z" fill="#fffdf3" stroke="#a58a4a" stroke-width="1"/><path d="M7.600 .6v3h3" fill="#ead9a6" stroke="#a58a4a" stroke-width=".8"/><path d="M6.700 4v4.600q0 1.800-1.800 1.800-.9 0-1.500-.5" stroke="#2a55b3" stroke-width="1.700" fill="none"/></svg>
<svg style="left:411px;top:134px" width="15" height="13" viewBox="0 0 15 13" ><rect x=".5" y=".5" width="13.500" height="11.500" fill="#fff" stroke="#6f8fc7" stroke-width="1"/><rect x="1" y="1" width="12.500" height="2.300" fill="#7fa2dd"/><rect x="2.300" y="4.800" width="2.600" height="2.300" fill="#5bb45b"/><rect x="6" y="4.800" width="2.600" height="2.300" fill="#e0953a"/><rect x="9.700" y="4.800" width="2.600" height="2.300" fill="#5b8fd6"/><rect x="2.300" y="8.200" width="2.600" height="2.300" fill="#e0953a"/><rect x="6" y="8.200" width="2.600" height="2.300" fill="#5b8fd6"/><rect x="9.700" y="8.200" width="2.600" height="2.300" fill="#5bb45b"/></svg>
<svg style="left:1258px;top:134px" width="12" height="6" viewBox="0 0 12 6" ><rect x="1" y="1" width="9.500" height="3" fill="#fff" stroke="#111" stroke-width="1.200"/></svg>
<svg style="left:1286px;top:134px" width="10" height="10" viewBox="0 0 10 10" ><rect x="2.800" y=".8" width="6" height="4.500" fill="#fff" stroke="#111" stroke-width="1.300"/><rect x=".8" y="4" width="6" height="4.500" fill="#fff" stroke="#111" stroke-width="1.300"/></svg>
<span class="t" style="left:108px;top:170px;font-size:15px;letter-spacing:0.054px;">Bound Properties:</span>
<div class="tbl" style="left:108px;top:200px;width:1193px;height:164px"></div>
<div class="hdr" style="left:109px;top:201px;width:1191px;height:25px"></div>
<div class="hsep" style="left:131px;top:202px;height:23px"></div>
<div class="hsep" style="left:381px;top:202px;height:23px"></div>
<div class="hsep" style="left:631px;top:202px;height:23px"></div>
<div class="hsep" style="left:801px;top:202px;height:23px"></div>
<div class="hsep" style="left:971px;top:202px;height:23px"></div>
<span class="t" style="left:137px;top:204px;font-size:15px;letter-spacing:0.216px;">Target</span>
<span class="t" style="left:387px;top:204px;font-size:15px;letter-spacing:0.228px;">Model</span>
<span class="t" style="left:637px;top:204px;font-size:15px;letter-spacing:0.085px;">Target Strategy</span>
<span class="t" style="left:807px;top:204px;font-size:15px;letter-spacing:0.151px;">Model Strategy</span>
<span class="t" style="left:977px;top:204px;font-size:15px;letter-spacing:-0.007px;">Binding</span>
<div class="selrow" style="left:109px;top:249px;width:1191px;height:23px"></div>
<div class="dv" style="left:131px;top:226px;height:69px"></div>
<div class="dv" style="left:381px;top:226px;height:69px"></div>
<div class="dv" style="left:631px;top:226px;height:69px"></div>
<div class="dv" style="left:801px;top:226px;height:69px"></div>
<div class="dv" style="left:971px;top:226px;height:69px"></div>
<div class="a" style="left:138px;top:226px;width:243px;height:22px;overflow:hidden">
<span class="t" style="left:0px;top:2px;font-size:15px;letter-spacing:0.161px;">tableViewerProductos.input(ObservableList)</span>
</div>
<div class="a" style="left:388px;top:226px;width:243px;height:22px;overflow:hidden">
<span class="t" style="left:0px;top:2px;font-size:15px;letter-spacing:0.400px;">WritableList(productList, Producto.class)</span>
</div>
<span class="t" style="left:138px;top:251px;font-size:15px;letter-spacing:0.266px;color:#fff;">tableViewerProductos.selection</span>
<span class="t" style="left:388px;top:251px;font-size:15px;letter-spacing:0.422px;color:#fff;">product</span>
<span class="t" style="left:638px;top:251px;font-size:15px;letter-spacing:-1.007px;color:#fff;">POLICY_UPDATE</span>
<span class="t" style="left:808px;top:251px;font-size:15px;letter-spacing:-1.007px;color:#fff;">POLICY_UPDATE</span>
<span class="t" style="left:138px;top:274px;font-size:15px;letter-spacing:0.223px;">txtBusqueda.text(SWT.Modify)</span>
<div class="a" style="left:388px;top:272px;width:243px;height:22px;overflow:hidden">
<span class="t" style="left:0px;top:2px;font-size:15px;letter-spacing:0.185px;">productFilter.detailValue("searchString")</span>
</div>
<span class="t" style="left:638px;top:274px;font-size:15px;letter-spacing:-1.007px;">POLICY_UPDATE</span>
<span class="t" style="left:808px;top:274px;font-size:15px;letter-spacing:-1.007px;">POLICY_UPDATE</span>
<span class="t" style="left:108px;top:376px;font-size:15px;letter-spacing:0.176px;">Target (Widgets): null.composite_3.tblProductos.tableViewerProductos.single selection</span>
<span class="t" style="left:711px;top:376px;font-size:15px;letter-spacing:0.005px;">Model (Beans): product.Object as IObservableValue</span>
<div class="inp" style="left:108px;top:401px;width:458px;height:25px"></div>
<div class="inp" style="left:711px;top:401px;width:458px;height:25px"></div>
<span class="t" style="left:113px;top:404px;font-size:15px;letter-spacing:0.425px;">type filter text</span>
<span class="t" style="left:717px;top:404px;font-size:15px;letter-spacing:0.425px;">type filter text</span>
<div class="btn" style="left:642px;top:401px;width:26px;height:26px"></div>
<div class="btn" style="left:1217px;top:401px;width:26px;height:26px"></div>
<div class="tbl" style="left:108px;top:434px;width:574px;height:96px;overflow:hidden">
<div class="grow" style="left:0;top:36px;width:573px;height:23px"></div>
</div>
<div class="a" style="left:109px;top:435px;width:573px;height:94px;overflow:hidden">
<span class="t" style="left:44px;top:-8px;font-size:15px;letter-spacing:0.176px;">composite_3</span>
<span class="t" style="left:55px;top:15px;font-size:15px;letter-spacing:0.384px;">tblProductos</span>
<span class="t" style="left:66px;top:38px;font-size:15px;letter-spacing:0.267px;">tableViewerProductos</span>
<span class="t" style="left:66px;top:61px;font-size:15px;letter-spacing:0.145px;">tblclmnId - "id"</span>
<span class="t" style="left:77px;top:84px;font-size:15px;letter-spacing:0.188px;">tableViewerColumn</span>
</div>
<div class="sb" style="left:685px;top:434px;height:96px"><div class="sbtr"></div><div class="sbt" style="top:43px;height:31px"><i></i></div><b class="u"></b><b class="d"></b></div>
<div class="tbl" style="left:711px;top:434px;width:574px;height:96px;overflow:hidden">
<div class="grow" style="left:0;top:26px;width:573px;height:23px"></div>
</div>
<span class="t" style="left:745px;top:440px;font-size:15px;letter-spacing:0.114px;">tableViewerProductos - TableViewer</span>
<span class="t" style="left:745px;top:463px;font-size:15px;letter-spacing:0.202px;">product - WritableValue</span>
<span class="t" style="left:745px;top:486px;font-size:15px;">txtBusqueda - Text</span>
<span class="t" style="left:745px;top:509px;font-size:15px;letter-spacing:0.252px;">productFilter - WritableValue</span>
<div class="sb" style="left:1288px;top:434px;height:96px"><div class="sbtr"></div><div class="sbt" style="top:31px;height:31px"><i></i></div><b class="u"></b><b class="d"></b></div>
<span class="t" style="left:108px;top:548px;font-size:15px;letter-spacing:0.223px;">Properties:</span>
<span class="t" style="left:711px;top:548px;font-size:15px;letter-spacing:0.223px;">Properties:</span>
<div class="tbl" style="left:108px;top:578px;width:590px;height:118px"><div class="grow" style="left:0;top:0;width:588px;height:24px"></div></div>
<div class="tbl" style="left:711px;top:578px;width:590px;height:118px"><div class="grow" style="left:0;top:0;width:588px;height:24px"></div></div>
<span class="t" style="left:142px;top:581px;font-size:15px;letter-spacing:0.027px;">single selection</span>
<span class="t" style="left:142px;top:604px;font-size:15px;letter-spacing:0.300px;">part of selection</span>
<span class="t" style="left:142px;top:627px;font-size:15px;letter-spacing:0.264px;">multi selection</span>
<span class="t" style="left:142px;top:650px;font-size:15px;letter-spacing:0.451px;">filters</span>
<span class="t" style="left:142px;top:673px;font-size:15px;letter-spacing:0.069px;font-weight:bold;color:#222;">input</span>
<span class="t" style="left:746px;top:581px;font-size:15px;letter-spacing:-0.233px;font-weight:bold;font-style:italic;color:#222;">Object as IObservableValue</span>
<span class="t" style="left:746px;top:604px;font-size:15px;letter-spacing:-0.057px;font-weight:bold;font-style:italic;color:#222;">Detail for IObservableValue</span>
<span class="t" style="left:745px;top:627px;font-size:15px;letter-spacing:0.119px;">disposed</span>
<span class="t" style="left:745px;top:650px;font-size:15px;letter-spacing:0.097px;font-style:italic;">realm</span>
<span class="t" style="left:745px;top:673px;font-size:15px;letter-spacing:0.062px;">stale</span>
<div class="a" style="left:249px;top:703px;width:84px;height:22px;background:linear-gradient(#f5a283,#fbd3c2);border:1px solid #d9a48f;border-top:none;border-radius:0 0 5px 5px"></div>
<div class="vsep" style="left:175px;top:704px;height:20px;background:#bbb"></div>
<span class="t" style="left:125px;top:704px;font-size:15px;letter-spacing:-0.422px;">Source</span>
<span class="t" style="left:199px;top:704px;font-size:15px;letter-spacing:-0.284px;">Design</span>
<span class="t" style="left:272px;top:704px;font-size:15px;letter-spacing:-0.193px;color:#222;">Bindings</span>
<div id="status" class="a"></div>
<span class="t" style="left:52px;top:743px;font-size:15px;letter-spacing:-0.067px;">Syntax error on token "ñ00100609664040009044_", delete this token</span>
<span class="t" style="left:706px;top:743px;font-size:15px;letter-spacing:0.531px;">Writable</span>
<span class="t" style="left:825px;top:743px;font-size:15px;letter-spacing:0.109px;">Smart Insert</span>
<span class="t" style="left:938px;top:743px;font-size:15px;letter-spacing:-0.696px;">395 : 2</span>
<div class="vsep" style="left:699px;top:741px;height:25px;background:#c9c9c9"></div>
<div class="vsep" style="left:817px;top:741px;height:25px;background:#c9c9c9"></div>
<div class="vsep" style="left:930px;top:741px;height:25px;background:#c9c9c9"></div>
<div class="dots" style="left:1040px;top:744px;height:20px;border-left:1px dotted #999"></div>
<svg style="left:1063px;top:173px" width="16" height="14" viewBox="0 0 16 14" ><rect x=".6" y=".6" width="14.600" height="12.800" fill="#f4f7fd" stroke="#5d7fc2" stroke-width="1.100"/><rect x="1" y="1" width="13.800" height="2.200" fill="#6a8fd6"/><path d="M4.500 7.500a3.300 3.300 0 0 1 6-1.500M11.200 9a3.300 3.300 0 0 1-6 1.500" stroke="#3f9a3a" stroke-width="1.700" fill="none"/><path d="M11.600 4.200v2.800h-2.800zM4 12.300V9.500h2.800z" fill="#3f9a3a"/></svg>
<div class="vsep" style="left:1089px;top:171px;height:15px;background:#dcdcdc"></div>
<div class="vsep" style="left:1129px;top:171px;height:15px;background:#dcdcdc"></div>
<div class="vsep" style="left:1197px;top:171px;height:15px;background:#dcdcdc"></div>
<div class="vsep" style="left:1265px;top:171px;height:15px;background:#dcdcdc"></div>
<svg style="left:1102px;top:173px" width="16" height="14" viewBox="0 0 16 14" ><g transform="rotate(32 10.5 6)"><rect x="7.500" y="-.5" width="6" height="12.500" rx="3" fill="#efeff3" stroke="#6f6f78" stroke-width="1.300"/><rect x="9.300" y="2" width="2.400" height="7.500" rx="1.200" fill="#fff" stroke="#8e8e96" stroke-width=".9"/></g><path d="M1 7.500h7M6 5.300L8.300 7.500 6 9.700M8 11H1.500M3.500 8.800L1.200 11l2.300 2.200" stroke="#17258f" stroke-width="1.500" fill="none"/></svg>
<svg style="left:1142px;top:173px" width="16" height="14" viewBox="0 0 16 14" ><g transform="rotate(32 10.5 6)"><rect x="7.500" y="-.5" width="6" height="12.500" rx="3" fill="#efeff3" stroke="#6f6f78" stroke-width="1.300"/><rect x="9.300" y="2" width="2.400" height="7.500" rx="1.200" fill="#fff" stroke="#8e8e96" stroke-width=".9"/></g><path d="M1.5 7.5l5 5M6.5 7.5l-5 5" stroke="#e8432e" stroke-width="2.300" stroke-linecap="round"/></svg>
<svg style="left:1170px;top:173px" width="16" height="14" viewBox="0 0 16 14" ><g transform="rotate(32 10.5 6)"><rect x="7.500" y="-.5" width="6" height="12.500" rx="3" fill="#efeff3" stroke="#6f6f78" stroke-width="1.300"/><rect x="9.300" y="2" width="2.400" height="7.500" rx="1.200" fill="#fff" stroke="#8e8e96" stroke-width=".9"/></g><path d="M1.5 6l5 5M6.5 6l-5 5" stroke="#e8432e" stroke-width="2.300" stroke-linecap="round"/><path d="M4.5 8l5 5M9.5 8l-5 5" stroke="#e8432e" stroke-width="2.300" stroke-linecap="round"/></svg>
<svg style="left:1211px;top:173px" width="14" height="14" viewBox="0 0 14 14" ><path d="M6.700 .8L12.500 7H9.300v6H4.100V7H.9z" fill="#fdf0b8" stroke="#c8921a" stroke-width="1.100" stroke-linejoin="round"/></svg>
<svg style="left:1239px;top:173px" width="14" height="14" viewBox="0 0 14 14" ><path d="M6.700 13.200L12.500 7H9.300V1H4.100v6H.9z" fill="#fdf0b8" stroke="#c8921a" stroke-width="1.100" stroke-linejoin="round"/></svg>
<svg style="left:1279px;top:172px" width="14" height="16" viewBox="0 0 14 16" ><path d="M2 1.500h6v4M5.800 3.800L8 6.300l2.200-2.500" stroke="#111" stroke-width="1.300" fill="none"/><circle cx="7.800" cy="11.500" r="4" fill="#3fa73c" stroke="#1f6e22" stroke-width="1"/><path d="M6.200 13.500v-4l3.200 4v-4" stroke="#fff" stroke-width="1" fill="none"/></svg>
<svg style="left:580px;top:406px" width="16" height="16" viewBox="0 0 16 16" ><path d="M.8 .6h6.500l3 3v9H.8z" fill="#f2f2f2" stroke="#d2d2d2" stroke-width=".9"/><path d="M2.500 4h5M2.500 6h6M2.500 8h6M2.500 10h4" stroke="#dcdcdc" stroke-width=".8"/><path d="M8.500 8.500l6 6M14.500 8.500l-6 6" stroke="#cfcfcf" stroke-width="2.400"/></svg>
<div class="vsep" style="left:606px;top:405px;height:15px;background:#dcdcdc"></div>
<svg style="left:619px;top:405.5px" width="17" height="17" viewBox="0 0 17 17" ><defs><pattern id="bp619" width="2.200" height="2.200" patternUnits="userSpaceOnUse" patternTransform="rotate(35)"><rect width="2.200" height="1.100" fill="#1d1a10"/><rect y="1.100" width="2.200" height="1.100" fill="#e0a33a"/></pattern></defs><ellipse cx="4.2" cy="5" rx="4" ry="3.2" transform="rotate(35 4.2 5)" fill="#d99a2e" stroke="#2a2410" stroke-width=".8"/><ellipse cx="4.2" cy="5" rx="3.4" ry="2.6" transform="rotate(35 4.2 5)" fill="url(#bp619)" opacity=".85"/><ellipse cx="12.3" cy="3.3" rx="2.8" ry="2.5" transform="rotate(35 12.3 3.3)" fill="#d99a2e" stroke="#2a2410" stroke-width=".8"/><ellipse cx="12.3" cy="3.3" rx="2.2" ry="1.9" transform="rotate(35 12.3 3.3)" fill="url(#bp619)" opacity=".85"/><ellipse cx="11.8" cy="12" rx="4.4" ry="3.9" transform="rotate(35 11.8 12)" fill="#d99a2e" stroke="#2a2410" stroke-width=".8"/><ellipse cx="11.8" cy="12" rx="3.8" ry="3.3" transform="rotate(35 11.8 12)" fill="url(#bp619)" opacity=".85"/></svg>
<svg style="left:649px;top:408px" width="15" height="15" viewBox="0 0 15 15" ><rect x=".6" y=".6" width="13.500" height="13.500" fill="#f4f8fd" stroke="#b3a57a" stroke-width="1.100"/><path d="M4.200 5v6.500h4M4.200 7.300h4M6 3.500h5" stroke="#4a78c2" stroke-width="1.100" fill="none"/><rect x="2.800" y="2.300" width="2.800" height="2.600" fill="#4a78c2"/><rect x="8.500" y="6" width="2.800" height="2.600" fill="#dbe7f7" stroke="#4a78c2" stroke-width=".9"/><rect x="8.500" y="10.200" width="2.800" height="2.600" fill="#dbe7f7" stroke="#4a78c2" stroke-width=".9"/></svg>
<svg style="left:674.3px;top:405.1px" width="18" height="18" viewBox="0 0 18 18" ><defs><radialGradient id="sg683" cx=".38" cy=".32" r=".75"><stop offset="0" stop-color="#8a86d8"/><stop offset=".35" stop-color="#3a379a"/><stop offset="1" stop-color="#14124a"/></radialGradient></defs><ellipse cx="9" cy="9" rx="9.300" ry="3.200" transform="rotate(-35 9 9)" fill="none" stroke="#e4e4ea" stroke-width="1"/><circle cx="9" cy="9" r="6.700" fill="url(#sg683)"/><path d="M3 13.200L15 4.800" stroke="#cfcfe6" stroke-width=".7"/><circle cx="12.300" cy="6.700" r="1" fill="#f4f4ff"/></svg>
<svg style="left:1183px;top:406px" width="16" height="16" viewBox="0 0 16 16" ><path d="M.8 .6h6.500l3 3v9H.8z" fill="#f2f2f2" stroke="#d2d2d2" stroke-width=".9"/><path d="M2.500 4h5M2.500 6h6M2.500 8h6M2.500 10h4" stroke="#dcdcdc" stroke-width=".8"/><path d="M8.500 8.500l6 6M14.500 8.500l-6 6" stroke="#cfcfcf" stroke-width="2.400"/></svg>
<div class="vsep" style="left:1209px;top:405px;height:15px;background:#dcdcdc"></div>
<svg style="left:1222px;top:406px" width="17" height="17" viewBox="0 0 17 17" ><defs><pattern id="bp1222" width="2.200" height="2.200" patternUnits="userSpaceOnUse" patternTransform="rotate(35)"><rect width="2.200" height="1.100" fill="#1d1a10"/><rect y="1.100" width="2.200" height="1.100" fill="#e0a33a"/></pattern></defs><ellipse cx="4.2" cy="5" rx="4" ry="3.2" transform="rotate(35 4.2 5)" fill="#d99a2e" stroke="#2a2410" stroke-width=".8"/><ellipse cx="4.2" cy="5" rx="3.4" ry="2.6" transform="rotate(35 4.2 5)" fill="url(#bp1222)" opacity=".85"/><ellipse cx="12.3" cy="3.3" rx="2.8" ry="2.5" transform="rotate(35 12.3 3.3)" fill="#d99a2e" stroke="#2a2410" stroke-width=".8"/><ellipse cx="12.3" cy="3.3" rx="2.2" ry="1.9" transform="rotate(35 12.3 3.3)" fill="url(#bp1222)" opacity=".85"/><ellipse cx="11.8" cy="12" rx="4.4" ry="3.9" transform="rotate(35 11.8 12)" fill="#d99a2e" stroke="#2a2410" stroke-width=".8"/><ellipse cx="11.8" cy="12" rx="3.8" ry="3.3" transform="rotate(35 11.8 12)" fill="url(#bp1222)" opacity=".85"/></svg>
<svg style="left:1251px;top:407px" width="15" height="15" viewBox="0 0 15 15" ><rect x=".6" y=".6" width="13.500" height="13.500" fill="#f4f8fd" stroke="#b3a57a" stroke-width="1.100"/><path d="M4.200 5v6.500h4M4.200 7.300h4M6 3.500h5" stroke="#4a78c2" stroke-width="1.100" fill="none"/><rect x="2.800" y="2.300" width="2.800" height="2.600" fill="#4a78c2"/><rect x="8.500" y="6" width="2.800" height="2.600" fill="#dbe7f7" stroke="#4a78c2" stroke-width=".9"/><rect x="8.500" y="10.200" width="2.800" height="2.600" fill="#dbe7f7" stroke="#4a78c2" stroke-width=".9"/></svg>
<svg style="left:1277.3px;top:405.1px" width="18" height="18" viewBox="0 0 18 18" ><defs><radialGradient id="sg1286" cx=".38" cy=".32" r=".75"><stop offset="0" stop-color="#8a86d8"/><stop offset=".35" stop-color="#3a379a"/><stop offset="1" stop-color="#14124a"/></radialGradient></defs><ellipse cx="9" cy="9" rx="9.300" ry="3.200" transform="rotate(-35 9 9)" fill="none" stroke="#e4e4ea" stroke-width="1"/><circle cx="9" cy="9" r="6.700" fill="url(#sg1286)"/><path d="M3 13.200L15 4.800" stroke="#cfcfe6" stroke-width=".7"/><circle cx="12.300" cy="6.700" r="1" fill="#f4f4ff"/></svg>
<svg style="left:615px;top:550.5px" width="17" height="16" viewBox="0 0 17 16" ><path d="M0 3h6.500M0 13h6.500" stroke="#4a8fd0" stroke-width="1.100"/><path d="M4 3h4M4 13h4M6 .8L8.300 3 6 5.200M6 10.800L8.300 13 6 15.200" stroke="#3d4a60" stroke-width="1.100" fill="none"/><path d="M9.800 .500v5M9.800 10.500v5" stroke="#27386a" stroke-width="1.200"/><path d="M4.500 8l1.500-1.700h5.500V4.500L16 8l-4.500 3.500V9.700H6z" fill="#fdf2c0" stroke="#c8860f" stroke-width="1"/></svg>
<div class="tri" style="left:642.5px;top:556px"></div>
<div class="vsep" style="left:662px;top:549px;height:15px;background:#dcdcdc"></div>
<svg style="left:676px;top:552px" width="15" height="13" viewBox="0 0 15 13" ><path d="M2.500 9.500q-2.500-.5-1.500-2.500 1-1.500 4-1.500l3-4q2-2 4-.5 1.500 1.500.5 4" fill="none" stroke="#dadada" stroke-width="1.300"/><path d="M10.500 6.500v6M7.500 9.500h6" stroke="#d3dad3" stroke-width="2.600"/></svg>
<svg style="left:1218px;top:550.5px" width="17" height="16" viewBox="0 0 17 16" ><path d="M0 3h6.500M0 13h6.500" stroke="#4a8fd0" stroke-width="1.100"/><path d="M4 3h4M4 13h4M6 .8L8.300 3 6 5.200M6 10.800L8.300 13 6 15.200" stroke="#3d4a60" stroke-width="1.100" fill="none"/><path d="M9.800 .500v5M9.800 10.500v5" stroke="#27386a" stroke-width="1.200"/><path d="M4.500 8l1.500-1.700h5.500V4.500L16 8l-4.500 3.500V9.700H6z" fill="#fdf2c0" stroke="#c8860f" stroke-width="1"/></svg>
<div class="tri" style="left:1245.5px;top:556px"></div>
<div class="vsep" style="left:1265px;top:549px;height:15px;background:#dcdcdc"></div>
<svg style="left:1279px;top:552px" width="15" height="13" viewBox="0 0 15 13" ><path d="M2.500 9.500q-2.500-.5-1.500-2.500 1-1.500 4-1.500l3-4q2-2 4-.5 1.500 1.500.5 4" fill="none" stroke="#dadada" stroke-width="1.300"/><path d="M10.500 6.500v6M7.500 9.500h6" stroke="#d3dad3" stroke-width="2.600"/></svg>
<svg style="left:0px;top:0px" width="1360" height="768" viewBox="0 0 1360 768" style="pointer-events:none"><circle cx="118.9" cy="237" r="4" fill="#7dbd78" stroke="#2f8a3a" stroke-width="1"/><circle cx="118.3" cy="236.4" r="1.8" fill="#a6d6a0"/><path d="M125 232.200v3.600q0 1.300-1.500 1.100M125 229.500v1.200" stroke="#2233b5" stroke-width="1.500" fill="none"/><path d="M121.500 256.6H116.200v2.600M118 263.6H124v-2.600" stroke="#111" stroke-width="1.200" fill="none"/><path d="M114.200 258.6h4l-2 2.200zM122 261.6h4l-2-2.200z" fill="#111"/><circle cx="123" cy="256.6" r="3.100" fill="#8cc886" stroke="#6ab368" stroke-width=".6"/><circle cx="114.800" cy="263.2" r="3.100" fill="#8cc886" stroke="#6ab368" stroke-width=".6"/><path d="M121.500 279.6H116.200v2.600M118 286.6H124v-2.600" stroke="#111" stroke-width="1.200" fill="none"/><path d="M114.200 281.6h4l-2 2.200zM122 284.6h4l-2-2.200z" fill="#111"/><circle cx="123" cy="279.6" r="3.100" fill="#8cc886" stroke="#6ab368" stroke-width=".6"/><circle cx="114.800" cy="286.2" r="3.100" fill="#8cc886" stroke="#6ab368" stroke-width=".6"/><circle cx="125.8" cy="585.6" r="2.800" fill="#e6ecfa" stroke="#6a7fb5" stroke-width=".9"/><circle cx="125.8" cy="585.6" r="1.100" fill="none" stroke="#3a4f9a" stroke-width=".7"/><circle cx="129.9" cy="590.5" r="3.7" fill="#7dbd78" stroke="#2f8a3a" stroke-width="1"/><circle cx="129.3" cy="589.9" r="1.665" fill="#a6d6a0"/><circle cx="129.9" cy="613.3" r="3.7" fill="#7dbd78" stroke="#2f8a3a" stroke-width="1"/><circle cx="129.3" cy="612.7" r="1.665" fill="#a6d6a0"/><circle cx="129.9" cy="636" r="3.7" fill="#7dbd78" stroke="#2f8a3a" stroke-width="1"/><circle cx="129.3" cy="635.4" r="1.665" fill="#a6d6a0"/><path d="M134 628.5q-2.200 3.200 0 6.400M136.4 628.5q2.200 3.200 0 6.400" stroke="#1f2fb0" stroke-width="1.100" fill="none"/><circle cx="129.9" cy="659" r="3.7" fill="#7dbd78" stroke="#2f8a3a" stroke-width="1"/><circle cx="129.3" cy="658.4" r="1.665" fill="#a6d6a0"/><path d="M134 651.5q-2.200 3.200 0 6.400M136.4 651.5q2.200 3.200 0 6.400" stroke="#1f2fb0" stroke-width="1.100" fill="none"/><circle cx="125.8" cy="677.6" r="2.800" fill="#e6ecfa" stroke="#6a7fb5" stroke-width=".9"/><circle cx="125.8" cy="677.6" r="1.100" fill="none" stroke="#3a4f9a" stroke-width=".7"/><circle cx="129.9" cy="682.5" r="3.7" fill="#7dbd78" stroke="#2f8a3a" stroke-width="1"/><circle cx="129.3" cy="681.9" r="1.665" fill="#a6d6a0"/><path d="M136.300 677.300v3.400q0 1.300-1.500 1.100M136.300 674.800v1.100" stroke="#2233b5" stroke-width="1.400" fill="none"/><circle cx="728.8" cy="585.6" r="2.800" fill="#e6ecfa" stroke="#6a7fb5" stroke-width=".9"/><circle cx="728.8" cy="585.6" r="1.100" fill="none" stroke="#3a4f9a" stroke-width=".7"/><circle cx="732.9" cy="590.5" r="3.7" fill="#7dbd78" stroke="#2f8a3a" stroke-width="1"/><circle cx="732.3" cy="589.9" r="1.665" fill="#a6d6a0"/><path d="M738 582.5v5M735.8 583.7l4.400 2.600M740.2 583.7l-4.400 2.600" stroke="#9a1218" stroke-width="1.100"/><circle cx="732.9" cy="613.3" r="3.7" fill="#7dbd78" stroke="#2f8a3a" stroke-width="1"/><circle cx="732.3" cy="612.7" r="1.665" fill="#a6d6a0"/><path d="M738 605.3v5M735.8 606.5l4.400 2.600M740.2 606.5l-4.400 2.600" stroke="#9a1218" stroke-width="1.100"/><circle cx="732.9" cy="636" r="3.7" fill="#7dbd78" stroke="#2f8a3a" stroke-width="1"/><circle cx="732.3" cy="635.4" r="1.665" fill="#a6d6a0"/><path d="M737 627.8v5.400M737 630.2h1.300q1.600 0 1.600 1.500t-1.600 1.500h-1.300" stroke="#8a1020" stroke-width="1.300" fill="none"/><circle cx="732.9" cy="659" r="3.7" fill="#7dbd78" stroke="#2f8a3a" stroke-width="1"/><circle cx="732.3" cy="658.4" r="1.665" fill="#a6d6a0"/><circle cx="732.9" cy="682" r="3.7" fill="#7dbd78" stroke="#2f8a3a" stroke-width="1"/><circle cx="732.3" cy="681.4" r="1.665" fill="#a6d6a0"/><path d="M737 673.8v5.400M737 676.2h1.300q1.600 0 1.600 1.500t-1.600 1.500h-1.300" stroke="#8a1020" stroke-width="1.300" fill="none"/><path d="M713.5 655v8l6-4z" fill="#6f6f6f"/><path d="M713.5 444.5v8l6-4z" fill="#6f6f6f"/><path d="M713.5 467.5v8l6-4z" fill="#6f6f6f"/><path d="M713.5 490.5v8l6-4z" fill="#6f6f6f"/><path d="M713.5 513.5v8l6-4z" fill="#6f6f6f"/><rect x="727.5" y="443.5" width="13" height="11.5" fill="#fff" stroke="#8a6f3a" stroke-width="1"/><rect x="728" y="444" width="12" height="2.600" fill="#f08a2a"/><path d="M731.833 446.5v8.5M736.167 446.5v8.5M727.5 446.9h13M727.5 450.9h13" stroke="#9a8a6a" stroke-width=".9"/><circle cx="737.9" cy="443.7" r="2.8" fill="#7dbd78" stroke="#2f8a3a" stroke-width="1"/><circle cx="737.3" cy="443.1" r="1.26" fill="#a6d6a0"/><ellipse cx="733.5" cy="472" rx="4.600" ry="4" transform="rotate(35 733.5 472)" fill="#d99a2e" stroke="#2a2410" stroke-width=".9"/><path d="M730 470.7l6 4.500M731.2 468.7l6 4.500" stroke="#2a2410" stroke-width="1.200"/><circle cx="737.6" cy="467.2" r="2.800" fill="#e6ecfa" stroke="#6a7fb5" stroke-width=".9"/><circle cx="737.6" cy="467.2" r="1.100" fill="none" stroke="#3a4f9a" stroke-width=".7"/><ellipse cx="733.5" cy="518" rx="4.600" ry="4" transform="rotate(35 733.5 518)" fill="#d99a2e" stroke="#2a2410" stroke-width=".9"/><path d="M730 516.7l6 4.500M731.2 514.7l6 4.500" stroke="#2a2410" stroke-width="1.200"/><circle cx="737.6" cy="513.2" r="2.800" fill="#e6ecfa" stroke="#6a7fb5" stroke-width=".9"/><circle cx="737.6" cy="513.2" r="1.100" fill="none" stroke="#3a4f9a" stroke-width=".7"/><rect x="726.500" y="490.500" width="14" height="8" fill="#eef4fb" stroke="#8fa6c8" stroke-width="1"/><path d="M729.500 488v13.500M727.500 488h4M727.500 501.500h4" stroke="#4a78c2" stroke-width="1" fill="none"/></svg>
<div class="a" style="left:109px;top:436px;width:573px;height:93px;overflow:hidden"><svg style="left:-109px;top:-436px" width="1360" height="768" viewBox="0 0 1360 768"><path d="M122.800 435.500h4.400l-2.200 3.400z" fill="#555"/><rect x="135.500" y="428.500" width="13" height="13.500" fill="#f1f4fb" stroke="#7f8aa8" stroke-width="1"/><path d="M131.5 455.5h8l-4 6z" fill="#555"/><rect x="146.5" y="453.5" width="13" height="11.5" fill="#fff" stroke="#8a6f3a" stroke-width="1"/><rect x="147" y="454" width="12" height="2.600" fill="#f08a2a"/><path d="M150.833 456.5v8.5M155.167 456.5v8.5M146.5 456.9h13M146.5 460.9h13" stroke="#9a8a6a" stroke-width=".9"/><rect x="157.5" y="476.3" width="12.5" height="11.5" fill="#fff" stroke="#8a6f3a" stroke-width="1"/><rect x="158" y="476.8" width="11.5" height="2.600" fill="#f08a2a"/><path d="M161.667 479.3v8.5M165.833 479.3v8.5M157.5 479.7h12.5M157.5 483.7h12.5" stroke="#9a8a6a" stroke-width=".9"/><circle cx="167.3" cy="477.3" r="2.800" fill="#e6ecfa" stroke="#6a7fb5" stroke-width=".9"/><circle cx="167.3" cy="477.3" r="1.100" fill="none" stroke="#3a4f9a" stroke-width=".7"/><path d="M142.5 501.5h8l-4 6z" fill="#555"/><rect x="161" y="499.3" width="4.600" height="11.500" fill="#fffbe8" stroke="#7a6a3a" stroke-width="1"/><rect x="161.5" y="499.8" width="3.600" height="2.400" fill="#f08a2a"/><path d="M161 505.5h4.600M161 508.3h4.600" stroke="#9a8a6a" stroke-width=".8"/><rect x="170.3" y="522.5" width="4.600" height="11.500" fill="#fffbe8" stroke="#7a6a3a" stroke-width="1"/><rect x="170.8" y="523" width="3.600" height="2.400" fill="#f08a2a"/><path d="M170.3 528.7h4.600M170.3 531.5h4.600" stroke="#9a8a6a" stroke-width=".8"/><circle cx="179.1" cy="523" r="2.8" fill="#7dbd78" stroke="#2f8a3a" stroke-width="1"/><circle cx="178.5" cy="522.4" r="1.26" fill="#a6d6a0"/></svg></div>
<svg style="left:106px;top:706px" width="15" height="15" viewBox="0 0 15 15" ><rect x=".7" y=".7" width="13" height="13" rx="2" fill="#fff" stroke="#8f9fcf" stroke-width="1.100"/><path d="M3.200 3.800h7" stroke="#3a9a3a" stroke-width="1.300"/><path d="M4.500 6.300h5" stroke="#2a55c4" stroke-width="1.300"/><path d="M3.200 8.800h4.500" stroke="#d63a2a" stroke-width="1.300"/><path d="M3.200 11.200h3.500" stroke="#e0a020" stroke-width="1.300"/></svg>
<svg style="left:180px;top:706px" width="16" height="15" viewBox="0 0 16 15" ><rect x=".6" y=".6" width="14.500" height="13" fill="#eef3fb" stroke="#44619a" stroke-width="1.100"/><rect x="1" y="1" width="13.700" height="2.400" fill="#4a72c0"/><path d="M3 6.500h3M3 10.300h3" stroke="#44619a" stroke-width="1"/><rect x="7.500" y="5" width="5" height="2.800" fill="#fff" stroke="#6f8fc7" stroke-width=".8"/><rect x="7.500" y="9" width="5" height="2.800" fill="#fff" stroke="#6f8fc7" stroke-width=".8"/></svg>
<svg style="left:252px;top:705px" width="17" height="17" viewBox="0 0 17 17" ><path d="M6.500 8.500l5 5.500q1.800 1.700 3.400.2 1.400-1.600-.2-3.400L6.500 2.300Q4.300.5 2.500 2.200.9 4 2.800 6.200l7 7.300" fill="none" stroke="#3f6fb8" stroke-width="1.500"/><path d="M6.500 8.500l5 5.500q1.800 1.700 3.400.2" fill="none" stroke="#8fb0e0" stroke-width=".6"/></svg>
<svg style="left:1282px;top:363px" width="16" height="22" viewBox="0 0 16 22" ><path d="M1.800 2v15.300l3.600-3.300 2.500 5.600 2.400-1.100-2.500-5.500h4.800z" fill="#fff" stroke="#000" stroke-width="1.500" stroke-linejoin="miter"/></svg>
</body></html>
